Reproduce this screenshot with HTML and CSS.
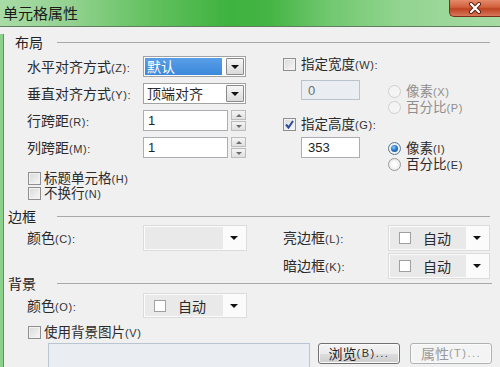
FILE: index.html
```html
<!DOCTYPE html>
<html lang="zh">
<head>
<meta charset="utf-8">
<title>单元格属性</title>
<link rel="stylesheet" href="styles.css">
</head>
<body>
<div class="titlebar">
  <span class="title">单元格属性</span>
  <div class="close">
    <svg width="14" height="12" viewBox="0 0 14 12"><path d="M3 2 L11 10 M11 2 L3 10" stroke="#5a2010" stroke-width="4" stroke-linecap="round"/><path d="M3 2 L11 10 M11 2 L3 10" stroke="#ffffff" stroke-width="2.2" stroke-linecap="round"/></svg>
  </div>
</div>
<div class="frame">
  <div class="content">
    <div class="heading h-first"><span class="htext">布局</span><span class="hline"></span></div>
    <div class="layout">
      <div class="lcol">
        <div class="frow"><span class="lbl">水平对齐方式<span class="k">(Z):</span></span>
          <div class="combo"><span class="combo-val sel">默认</span><span class="combo-btn"><i class="tri"></i></span></div>
        </div>
        <div class="frow"><span class="lbl">垂直对齐方式<span class="k">(Y):</span></span>
          <div class="combo"><span class="combo-val">顶端对齐</span><span class="combo-btn"><i class="tri"></i></span></div>
        </div>
        <div class="frow"><span class="lbl">行跨距<span class="k">(R):</span></span>
          <div class="inp">1</div>
          <div class="spin"><span class="sp"><i class="up"></i></span><span class="sp"><i class="dn"></i></span></div>
        </div>
        <div class="frow"><span class="lbl">列跨距<span class="k">(M):</span></span>
          <div class="inp">1</div>
          <div class="spin"><span class="sp"><i class="up"></i></span><span class="sp"><i class="dn"></i></span></div>
        </div>
        <div class="checks">
          <div class="crow"><span class="cb"></span><span class="t">标题单元格<span class="k">(H)</span></span></div>
          <div class="crow"><span class="cb"></span><span class="t">不换行<span class="k">(N)</span></span></div>
        </div>
      </div>
      <div class="rcol">
        <div class="crow rc-first"><span class="cb"></span><span class="t">指定宽度<span class="k">(W):</span></span></div>
        <div class="sizeblock">
          <div class="inp small dis">0</div>
          <div class="radios">
            <div class="rrow dis-t"><span class="rb rdis"></span><span class="t">像素<span class="k">(X)</span></span></div>
            <div class="rrow dis-t"><span class="rb rdis"></span><span class="t">百分比<span class="k">(P)</span></span></div>
          </div>
        </div>
        <div class="crow rc-second"><span class="cb"><svg width="11" height="11" viewBox="0 0 11 11"><path d="M2 5.5 L4.5 8.5 L9 2" fill="none" stroke="#2b4a9a" stroke-width="2"/></svg></span><span class="t">指定高度<span class="k">(G):</span></span></div>
        <div class="sizeblock">
          <div class="inp small">353</div>
          <div class="radios">
            <div class="rrow"><span class="rb rsel"><i></i></span><span class="t">像素<span class="k">(I)</span></span></div>
            <div class="rrow"><span class="rb"></span><span class="t">百分比<span class="k">(E)</span></span></div>
          </div>
        </div>
      </div>
    </div>

    <div class="heading h-border"><span class="htext">边框</span><span class="hline"></span></div>
    <div class="brow first">
      <span class="lbl">颜色<span class="k">(C):</span></span>
      <div class="cpick"><span class="cval"></span><span class="carrow"><i class="tri"></i></span></div>
      <span class="gap36"></span>
      <span class="lbl rlbl">亮边框<span class="k">(L):</span></span>
      <div class="cpick r"><span class="cval"><span class="sq"></span>自动</span><span class="carrow"><i class="tri"></i></span></div>
    </div>
    <div class="brow">
      <span class="spacer"></span>
      <span class="lbl rlbl">暗边框<span class="k">(K):</span></span>
      <div class="cpick r"><span class="cval"><span class="sq"></span>自动</span><span class="carrow"><i class="tri"></i></span></div>
    </div>

    <div class="heading h-bg"><span class="htext">背景</span><span class="hline"></span></div>
    <div class="brow bg-row">
      <span class="lbl">颜色<span class="k">(O):</span></span>
      <div class="cpick"><span class="cval"><span class="sq"></span>自动</span><span class="carrow"><i class="tri"></i></span></div>
    </div>
    <div class="crow bg-check"><span class="cb"></span><span class="t">使用背景图片<span class="k">(V)</span></span></div>
    <div class="lastrow">
      <div class="path"></div>
      <div class="btn">浏览<span class="k">(B)...</span></div>
      <div class="btn disabled">属性<span class="k">(T)...</span></div>
    </div>
  </div>
</div>
</body>
</html>
```
FILE: styles.css
```css
* { box-sizing: border-box; }
html, body { margin: 0; padding: 0; }
body {
  width: 500px;
  height: 367px;
  overflow: hidden;
  background: #f0f0f0;
  font-family: "Noto Sans CJK SC", "Noto Sans", sans-serif;
  font-size: 14px;
  color: #2a2a2a;
}
.titlebar {
  height: 27px;
  border-bottom: 1px solid #5f7f5f;
  background: linear-gradient(90deg, #a9dba6 0%, #93d290 14%, #63c160 30%, #3eb23e 46%, #45b545 54%, #72c870 66%, #92d490 80%, #a6dba4 100%);
  display: flex;
  justify-content: space-between;
  align-items: flex-start;
}
.title {
  font-size: 15px;
  line-height: 25px;
  padding-left: 3px;
  color: #1a1a1a;
}
.close {
  width: 51px;
  height: 17px;
  border: 1px solid #7a2e18;
  border-top: none;
  border-right: none;
  border-radius: 0 0 0 5px;
  background: linear-gradient(#e48a6c 0%, #d2603c 45%, #bd4322 55%, #d9775a 100%);
  display: flex;
  align-items: center;
  justify-content: center;
}
.frame {
  height: 340px;
  border-left: 3px solid #8bd18b;
}
.content {
  height: 100%;
  border-left: 1px solid #6b876b;
}
.heading {
  display: flex;
  align-items: center;
  height: 16px;
  line-height: 16px;
  font-size: 14px;
  color: #222;
}
.htext { width: 53px; }
.hline { flex: 1; height: 1px; background: #a8a8a8; margin-right: 10px; }
.h-first { margin-top: 7px; }
.h-first .htext { padding-left: 11px; }
.h-border { margin-top: 7px; }
.h-border .htext, .h-bg .htext { padding-left: 4px; }
.h-bg { margin-top: -4px; }
.h-bg .hline { margin-right: 8px; }

.k {
  font-family: "Liberation Sans", sans-serif;
  font-size: 11px;
  letter-spacing: 0.6px;
  color: #333;
}
.lbl { width: 116px; flex: none; white-space: nowrap; line-height: 20px; }

.layout { display: flex; margin-top: 6px; padding-left: 23px; }
.lcol { width: 219px; }
.frow { display: flex; align-items: center; height: 21px; margin-bottom: 6px; }
.frow:nth-child(4) { margin-bottom: 0; }
.combo {
  width: 103px; height: 21px;
  border: 1px solid #a2a2a2;
  background: #fff;
  padding: 1px;
  display: flex;
  align-items: center;
}
.combo-val {
  flex: 1; height: 17px; line-height: 17px;
  padding-left: 2px; margin-right: 4px;
  font-size: 14px;
}
.sel { background: linear-gradient(#5a9ee6, #3a88dc); color: #fff; }
.combo-btn {
  width: 18px; height: 17px;
  border: 1px solid #8a8a8a;
  border-radius: 1px;
  background: linear-gradient(#f6f6f6, #dadada);
  display: flex; align-items: center; justify-content: center;
}
.tri {
  width: 0; height: 0;
  border-left: 4px solid transparent;
  border-right: 4px solid transparent;
  border-top: 4px solid #111;
}
.inp {
  width: 85px; height: 21px;
  border: 1px solid #abadb3;
  background: #fff;
  font-family: "Liberation Sans", sans-serif;
  font-size: 13px;
  line-height: 19px;
  padding-left: 4px;
  color: #222;
}
.spin { width: 15px; height: 21px; margin-left: 3px; display: flex; flex-direction: column; gap: 1px; }
.sp {
  flex: 1;
  border: 1px solid #bcbcbc;
  background: linear-gradient(#f4f4f4, #e0e0e0);
  display: flex; align-items: center; justify-content: center;
}
.up { width: 0; height: 0; border-left: 3px solid transparent; border-right: 3px solid transparent; border-bottom: 3px solid #6c6c6c; }
.dn { width: 0; height: 0; border-left: 3px solid transparent; border-right: 3px solid transparent; border-top: 3px solid #6c6c6c; }

.checks { margin-top: 13px; }
.crow { display: flex; align-items: center; height: 15px; line-height: 15px; gap: 3px; }
.t {
  display: block; height: 15px; line-height: 15px; white-space: nowrap;
  font-family: "Liberation Sans", "Noto Sans CJK SC", sans-serif;
  font-size: 13.5px;
}
.checks .crow { padding-left: 1px; }
.cb {
  width: 13px; height: 13px; flex: none;
  border: 1px solid #8f8f8f;
  background: linear-gradient(135deg, #d9d9d9, #f7f7f7);
  box-shadow: inset 0 0 0 1px #f2f2f2;
  display: flex; align-items: center; justify-content: center;
}
.cb svg { display: block; }

.rcol { margin-left: 37px; width: 210px; }
.rc-first { margin-top: 1px; gap: 5px; }
.rc-second { margin-top: 2px; gap: 5px; }
.sizeblock { display: flex; margin-top: 8px; padding-left: 18px; }
.rc-second + .sizeblock { margin-top: 5px; }
.inp.small { width: 59px; height: 21px; padding-left: 6px; }
.inp.dis { background: #eaeef2; border-color: #b9c3cd; color: #6e6e6e; height: 20px; }
.radios { margin-left: 28px; padding-top: 4px; }
.rrow { display: flex; align-items: center; height: 15.5px; line-height: 15px; gap: 5px; }
.rb {
  width: 13px; height: 13px; flex: none;
  border-radius: 50%;
  border: 1px solid #9a9a9a;
  background: radial-gradient(circle at 50% 50%, #ffffff 20%, #dedede 100%);
  display: flex; align-items: center; justify-content: center;
}
.rdis { border-color: #cfcfcf; background: #f4f4f4; }
.dis-t, .dis-t .k { color: #8e8e8e; }
.rsel { border-color: #5b7896; }
.rsel i {
  width: 7px; height: 7px; border-radius: 50%;
  background: radial-gradient(circle at 40% 35%, #8fd0ff 0%, #2a78c8 45%, #0f4a8c 100%);
}

.brow { display: flex; align-items: center; height: 26px; padding-left: 23px; }
.brow.first { margin-top: 1px; margin-bottom: 2px; }
.gap36 { width: 36px; flex: none; }
.spacer { width: 256px; flex: none; }
.rlbl { width: 105px; }
.cpick {
  width: 104px; height: 26px; flex: none;
  border: 1px solid #dcdcdc;
  background: #fbfbfb;
  padding: 1px;
  display: flex;
}
.cpick.r { width: 102px; }
.cval {
  flex: 1;
  background: #e9e9e9;
  display: flex; align-items: center;
  padding-left: 9px;
  font-size: 14px;
  line-height: 20px;
}
.sq {
  width: 12px; height: 12px;
  border: 1px solid #a0a0a0;
  background: #fff;
  margin-right: 12px;
}
.carrow { width: 22px; display: flex; align-items: center; justify-content: center; }
.bg-row { margin-top: 2px; height: 25px; }
.bg-row .cpick { height: 25px; }
.bg-check { margin-top: 7px; padding-left: 24px; gap: 3px; }
.lastrow { display: flex; align-items: flex-start; margin-top: 3px; padding-left: 44px; }
.path {
  width: 262px; height: 26px;
  border: 1px solid #b8c6d4;
  background: #eaeef3;
}
.btn {
  width: 82px; height: 21px;
  margin-left: 8px;
  border: 1px solid #707070;
  border-radius: 3px;
  background: linear-gradient(#f4f4f4 0%, #ebebeb 50%, #dddddd 51%, #cfcfcf 100%);
  box-shadow: inset 0 0 0 1px #fbfbfb;
  display: flex; align-items: center; justify-content: center;
  font-size: 14px;
  line-height: 19px;
  color: #222;
}
.btn .k { letter-spacing: 1.5px; }
.btn.disabled {
  margin-left: 10px;
  border-color: #adb2b5;
  background: #f4f4f4;
  color: #9a9a9a;
}
.btn.disabled .k { color: #9a9a9a; }
```
